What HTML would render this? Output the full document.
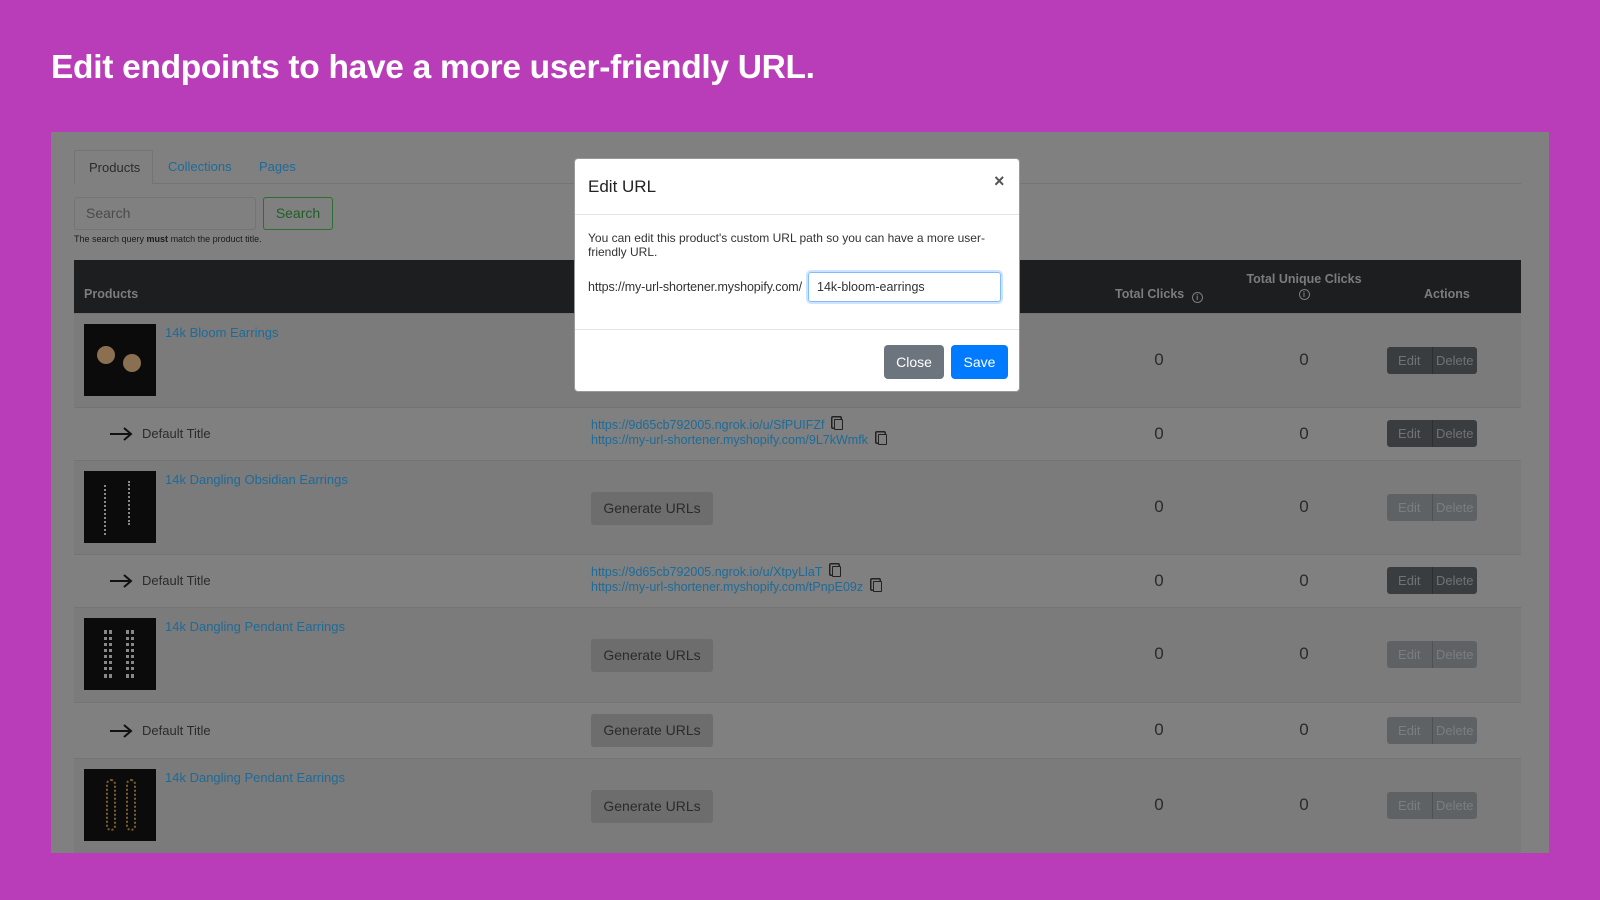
<!DOCTYPE html>
<html><head><meta charset="utf-8"><style>
*{box-sizing:border-box;margin:0;padding:0}
body{width:1600px;height:900px;background:#b93db8;font-family:"Liberation Sans",Arial,sans-serif;position:relative;overflow:hidden}
.abs{position:absolute}
h1{position:absolute;left:51px;top:49px;font-size:33.5px;font-weight:bold;color:#fff;letter-spacing:-0.3px;white-space:nowrap}
#panel{left:51px;top:132px;width:1498px;height:721px;background:#808080;overflow:hidden}
.tabline{left:23px;top:51px;width:1447px;height:1px;background:#747474}
.tab{top:18px;height:34px;font-size:13px;line-height:34px;padding:0 14px}
.link{color:#1d6b99}
.row{left:23px;width:1447px;border-top:1px solid #747474}
.thumb{position:absolute;left:10px;width:72px;height:72px;background:#0b0b0b}
.ptitle{position:absolute;left:91px;font-size:13px;color:#1d6b99}
.num{position:absolute;font-size:17px;color:#2a2a2a;width:40px;text-align:center}
.n1{left:1065px}.n2{left:1210px}
.btns{position:absolute;left:1313px;width:90px;height:27px;border-radius:3px;display:flex;font-size:13px;line-height:27px}
.btns span{flex:1;text-align:center}
.dark{background:#3a3d40;color:#6f7375}
.dis{background:#5f6264;color:#7b7e80}
.dis span:first-child{border-right:1px solid #4f5254}
.dark span:first-child{border-right:1px solid #2c2e30}
.gen{position:absolute;left:517px;width:122px;height:33px;background:#6d6d6d;border-radius:3px;font-size:14px;color:#2b2b2b;text-align:center;line-height:33px}
.var{position:absolute;left:68px;font-size:13px;color:#2b2b2b}
.arrow{position:absolute;left:35px}
.urls{position:absolute;left:517px;font-size:12.5px;color:#1d6b99;line-height:15px}
.copy{display:inline-block;width:9px;height:11px;border:1.5px solid #222;border-radius:1px;margin-left:10px;vertical-align:-1px;box-shadow:-2px -2px 0 -0.5px #808080,-2px -2px 0 1px #222}
</style></head><body>
<h1>Edit endpoints to have a more user-friendly URL.</h1>
<div id="panel" class="abs">
  <div class="abs tabline"></div>
  <div class="abs tab" style="left:23px;width:79px;background:#808080;border:1px solid #747474;border-bottom:none;color:#2b2b2b">Products</div>
  <div class="abs tab link" style="left:103px">Collections</div>
  <div class="abs tab link" style="left:194px">Pages</div>
  <div class="abs" style="left:23px;top:65px;width:182px;height:33px;border:1px solid #747474;border-radius:3px;font-size:14px;color:#4a4a4a;line-height:31px;padding-left:11px">Search</div>
  <div class="abs" style="left:212px;top:65px;width:70px;height:33px;border:1px solid #2c6e33;border-radius:3px;font-size:14px;color:#1f5e27;line-height:31px;text-align:center">Search</div>
  <div class="abs" style="left:23px;top:102px;font-size:9px;color:#1a1a1a">The search query <b>must</b> match the product title.</div>
  <div class="abs" style="left:23px;top:128px;width:1447px;height:53px;background:#1c1e20;color:#7a7c7e;font-size:12.5px;font-weight:bold">
    <span class="abs" style="left:1041px;top:27px;white-space:nowrap">Total Clicks <span style="display:inline-block;width:11px;height:11px;border:1px solid #7a7c7e;border-radius:50%;font-size:8px;line-height:9px;text-align:center;margin-left:4px;vertical-align:-2px">i</span></span>
    <span class="abs" style="left:10px;top:27px">Products</span>
    <span class="abs" style="left:1160px;top:12px;width:140px;text-align:center;white-space:nowrap">Total Unique Clicks<br><span style="display:inline-block;width:11px;height:11px;border:1px solid #7a7c7e;border-radius:50%;font-size:8px;line-height:9px;text-align:center">i</span></span>
    <span class="abs" style="left:1350px;top:27px">Actions</span>
  </div>
  <div class="abs row" style="top:181px;height:94px;background:#7b7b7b">
    <div class="thumb" style="top:10px"><div class="abs" style="left:13px;top:22px;width:18px;height:18px;border-radius:50%;background:#8a7050"></div><div class="abs" style="left:39px;top:30px;width:18px;height:18px;border-radius:50%;background:#8a7050"></div></div>
    <div class="ptitle" style="top:11px">14k Bloom Earrings</div>
    <div class="num n1" style="top:36px">0</div><div class="num n2" style="top:36px">0</div>
    <div class="btns dark" style="top:33px"><span>Edit</span><span>Delete</span></div>
  </div>
  <div class="abs row" style="top:275px;height:53px;background:#808080">
    <svg class="arrow" style="top:18px" width="24" height="16" viewBox="0 0 24 16"><path d="M1 8H22M15 2l7 6-7 6" fill="none" stroke="#111" stroke-width="2"/></svg><div class="var" style="top:18px">Default Title</div>
    <div class="urls" style="top:10px">https://9d65cb792005.ngrok.io/u/SfPUIFZf<span class="copy"></span><br>https://my-url-shortener.myshopify.com/9L7kWmfk<span class="copy"></span></div>
    <div class="num n1" style="top:16px">0</div><div class="num n2" style="top:16px">0</div>
    <div class="btns dark" style="top:12px"><span>Edit</span><span>Delete</span></div>
  </div>
  <div class="abs row" style="top:328px;height:94px;background:#7b7b7b">
    <div class="thumb" style="top:10px"><div class="abs" style="left:20px;top:14px;width:6px;height:50px;border-left:2px dotted #888"></div><div class="abs" style="left:44px;top:10px;width:6px;height:44px;border-left:2px dotted #888"></div></div>
    <div class="ptitle" style="top:11px">14k Dangling Obsidian Earrings</div>
    <div class="gen" style="top:31px">Generate URLs</div>
    <div class="num n1" style="top:36px">0</div><div class="num n2" style="top:36px">0</div>
    <div class="btns dis" style="top:33px"><span>Edit</span><span>Delete</span></div>
  </div>
  <div class="abs row" style="top:422px;height:53px;background:#808080">
    <svg class="arrow" style="top:18px" width="24" height="16" viewBox="0 0 24 16"><path d="M1 8H22M15 2l7 6-7 6" fill="none" stroke="#111" stroke-width="2"/></svg><div class="var" style="top:18px">Default Title</div>
    <div class="urls" style="top:10px">https://9d65cb792005.ngrok.io/u/XtpyLlaT<span class="copy"></span><br>https://my-url-shortener.myshopify.com/tPnpE09z<span class="copy"></span></div>
    <div class="num n1" style="top:16px">0</div><div class="num n2" style="top:16px">0</div>
    <div class="btns dark" style="top:12px"><span>Edit</span><span>Delete</span></div>
  </div>
  <div class="abs row" style="top:475px;height:95px;background:#7b7b7b">
    <div class="thumb" style="top:10px"><div class="abs" style="left:20px;top:12px;width:8px;height:48px;border-left:3px dotted #888;border-right:3px dotted #888"></div><div class="abs" style="left:42px;top:12px;width:8px;height:48px;border-left:3px dotted #888;border-right:3px dotted #888"></div></div>
    <div class="ptitle" style="top:11px">14k Dangling Pendant Earrings</div>
    <div class="gen" style="top:31px">Generate URLs</div>
    <div class="num n1" style="top:36px">0</div><div class="num n2" style="top:36px">0</div>
    <div class="btns dis" style="top:33px"><span>Edit</span><span>Delete</span></div>
  </div>
  <div class="abs row" style="top:570px;height:56px;background:#808080">
    <svg class="arrow" style="top:20px" width="24" height="16" viewBox="0 0 24 16"><path d="M1 8H22M15 2l7 6-7 6" fill="none" stroke="#111" stroke-width="2"/></svg><div class="var" style="top:20px">Default Title</div>
    <div class="gen" style="top:11px">Generate URLs</div>
    <div class="num n1" style="top:17px">0</div><div class="num n2" style="top:17px">0</div>
    <div class="btns dis" style="top:14px"><span>Edit</span><span>Delete</span></div>
  </div>
  <div class="abs row" style="top:626px;height:100px;background:#7b7b7b">
    <div class="thumb" style="top:10px"><div class="abs" style="left:22px;top:10px;width:10px;height:52px;border:2px dotted #7a6030;border-radius:5px"></div><div class="abs" style="left:42px;top:10px;width:10px;height:52px;border:2px dotted #7a6030;border-radius:5px"></div></div>
    <div class="ptitle" style="top:11px">14k Dangling Pendant Earrings</div>
    <div class="gen" style="top:31px">Generate URLs</div>
    <div class="num n1" style="top:36px">0</div><div class="num n2" style="top:36px">0</div>
    <div class="btns dis" style="top:33px"><span>Edit</span><span>Delete</span></div>
  </div>
</div>
<div class="abs" style="left:574px;top:158px;width:446px;height:234px;background:#fff;border-radius:4px;border:1px solid #999">
  <div class="abs" style="left:13px;top:18px;font-size:17px;color:#222">Edit URL</div>
  <div class="abs" style="left:419px;top:12px;font-size:18px;font-weight:bold;color:#555">×</div>
  <div class="abs" style="left:0;top:55px;width:444px;height:1px;background:#e5e5e5"></div>
  <div class="abs" style="left:13px;top:72px;width:414px;font-size:12px;line-height:14px;color:#333">You can edit this product's custom URL path so you can have a more user-friendly URL.</div>
  <div class="abs" style="left:13px;top:121px;font-size:12.5px;color:#333;letter-spacing:-0.1px">https://my-url-shortener.myshopify.com/</div>
  <div class="abs" style="left:233px;top:113px;width:193px;height:30px;border:1px solid #80bdff;box-shadow:0 0 0 2px #cfe3ff;border-radius:3px;font-size:12.5px;line-height:28px;padding-left:8px;color:#333">14k-bloom-earrings</div>
  <div class="abs" style="left:0;top:170px;width:444px;height:1px;background:#e5e5e5"></div>
  <div class="abs" style="left:309px;top:186px;width:60px;height:34px;background:#6c757d;border-radius:4px;color:#fff;font-size:14px;line-height:34px;text-align:center">Close</div>
  <div class="abs" style="left:376px;top:186px;width:57px;height:34px;background:#007bff;border-radius:4px;color:#fff;font-size:14px;line-height:34px;text-align:center">Save</div>
</div>
</body></html>
